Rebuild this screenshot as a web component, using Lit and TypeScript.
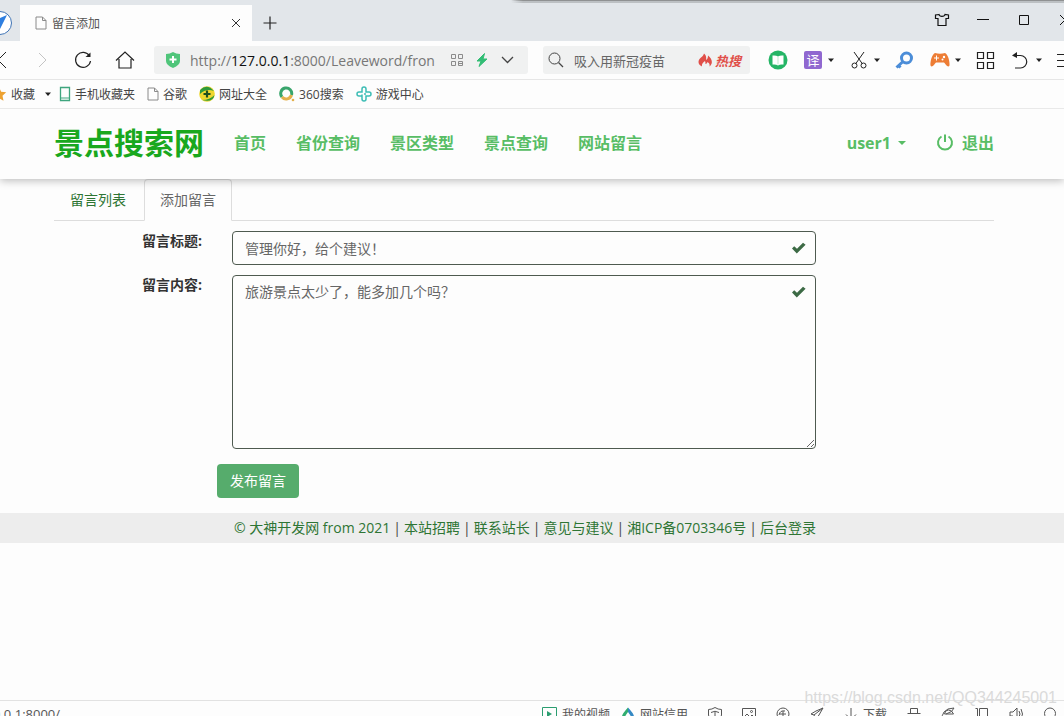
import { LitElement, html, svg, css, TemplateResult } from "lit";
import { customElement, state } from "lit/decorators.js";

const icon = (w: number, h: number, body: unknown): TemplateResult =>
  html`<svg width=${w} height=${h} viewBox="0 0 ${w} ${h}" fill="none" stroke="currentColor" aria-hidden="true">${body}</svg>`;

const page = () => icon(12, 14, svg`<path d="M1 1h6.500L11 4.500V13H1zM7.500 1v3.500H11" stroke="#8a8a8a"/>`);
const caret = () => html`<svg width="6" height="4" viewBox="0 0 6 4" aria-hidden="true"><path d="M0 0.500h6L3 4z" fill="#222"/></svg>`;
const check = () => html`<svg class="check" width="16" height="12" viewBox="0 0 16 12" aria-hidden="true"><path d="M1 6.500L3.200 4.300 6 6.800 12 0.800l2.600 2L5.800 11.500z" fill="#3c6a45"/></svg>`;

@customElement("browser-chrome")
export class BrowserChrome extends LitElement {
  static styles = css`
    :host { display: block; color: #444; font-size: 12px; }
    * { box-sizing: border-box; }
    svg { display: block; flex: none; }
    button { border: 0; background: none; padding: 0; margin: 0; font: inherit; color: inherit; display: flex; align-items: center; justify-content: center; flex: none; }
    .strip { display: flex; height: 41px; padding-top: 5px; overflow: hidden;
      background: linear-gradient(90deg, transparent, #8f9192 12px) right top / 52% 1px no-repeat,
        linear-gradient(90deg, transparent, #bcc0c3 12px) right top / 52% 3px no-repeat, #e2e6ea; }
    .logo { margin-left: -13px; }
    .tab { display: flex; align-items: center; gap: 5px; width: 232px; margin-left: 7px; padding: 0 10px 0 15px; background: #fdfdfd; }
    .title { flex: 1; color: #555; }
    .plus { width: 36px; color: #222; }
    .window { display: flex; margin-left: auto; margin-right: -21px; height: 30px; color: #111; }
    .window button { width: 41px; }
    .bar { display: flex; align-items: center; height: 39px; overflow: hidden; background: #fdfdfd; border-bottom: 1px solid #e6e6e6; }
    .nav { display: flex; margin-left: -22px; }
    .nav button { width: 42px; }
    .box { display: flex; align-items: center; height: 28px; border-radius: 3px; background: #f0f1f1; }
    .address { flex: 1; min-width: 0; margin-left: 8px; padding: 0 14px 0 11px; gap: 9px; }
    .url { flex: 1; min-width: 0; overflow: hidden; white-space: nowrap; font-size: 14px; color: #777; }
    .host { color: #111; }
    .actions { display: flex; align-items: center; gap: 13px; }
    .search { width: 207px; margin-left: 15px; padding: 0 9px 0 5px; gap: 10px; }
    .search input { flex: 1; min-width: 0; border: 0; padding: 0; background: none; outline: 0; font: inherit; font-size: 13px; color: #666; }
    .hot { display: flex; align-items: center; gap: 2px; font-size: 13px; font-weight: 700; font-style: italic; color: #e04f49; text-decoration: none; }
    .tools { display: flex; gap: 15px; margin: 0 -9px 0 18px; color: #222; }
    .tools button { gap: 5px; }
    .tools button:last-child { margin-left: -4px; }
    .translate { width: 18px; height: 18px; margin: 0 1px; border-radius: 2px; background: #9068d0; color: #fff; font-size: 13px; line-height: 18px; text-align: center; }
    .marks { display: flex; align-items: center; gap: 12px; height: 29px; overflow: hidden; background: #fdfdfd; border-bottom: 1px solid #e9e9e9; }
    .marks a { display: flex; align-items: center; gap: 4px; color: inherit; text-decoration: none; white-space: nowrap; }
    .fav { display: flex; align-items: center; gap: 4px; margin-left: -9px; }
    .fav svg:last-child { margin-left: 6px; }
    .marks a:first-of-type { margin-left: -4px; }
  `;

  private tool(label: string, glyph: unknown, menu = false) {
    return html`<button aria-label=${label}>${glyph}${menu ? caret() : ""}</button>`;
  }

  render() {
    return html`
      <div class="strip">
        <button class="logo" aria-label="浏览器">${icon(26, 26, svg`<circle cx="13" cy="13" r="11.500" fill="#fff" stroke="#3f74b5"/><path d="M20 5L4 12l6 2 2 7z" fill="#2f7fe0" stroke="none"/>`)}</button>
        <div class="tab">${page()}<span class="title">留言添加</span>
          <button aria-label="关闭标签">${icon(12, 12, svg`<path d="M2 2l8 8M10 2l-8 8" stroke="#333"/>`)}</button>
        </div>
        <button class="plus" aria-label="新标签">${icon(14, 14, svg`<path d="M7 0.500v13M0.500 7h13" stroke-width="1.200"/>`)}</button>
        <div class="window">
          <button aria-label="皮肤">${icon(16, 14, svg`<path d="M5 1.500L1.500 2v3.500H4v7h8v-7h2.500V2L11 1.500C10.500 4 5.500 4 5 1.500z" stroke-width="1.200"/>`)}</button>
          <button aria-label="最小化">${icon(12, 12, svg`<path d="M0 5.500h12"/>`)}</button>
          <button aria-label="最大化">${icon(12, 12, svg`<path d="M1.500 1.500h9v9h-9z"/>`)}</button>
          <button aria-label="关闭">${icon(12, 12, svg`<path d="M1 1l10 10M11 1L1 11"/>`)}</button>
        </div>
      </div>
      <div class="bar">
        <div class="nav">
          <button aria-label="后退">${icon(16, 18, svg`<path d="M15 1L7 9l8 8" stroke="#222"/>`)}</button>
          <button aria-label="前进">${icon(12, 18, svg`<path d="M4 2l7 7-7 7" stroke="#c4c4c4"/>`)}</button>
          <button aria-label="刷新">${icon(18, 18, svg`<path d="M15.500 5A7.500 7.500 0 1 0 16.500 10" stroke="#222" stroke-width="1.200"/><path d="M16.500 1.500v4.500h-5z" fill="#222" stroke="none"/>`)}</button>
          <button aria-label="主页">${icon(20, 18, svg`<path d="M1 9.500L10 1l9 8.500M4 8v9h12V8" stroke="#222" stroke-width="1.200"/>`)}</button>
        </div>
        <div class="box address">
          ${icon(16, 18, svg`<path d="M1 3Q5 3 8 1q3 2 7 2v7q0 4-7 7-7-3-7-7z" fill="#4fc57a" stroke="none"/><path d="M8 5v7M4.500 8.500h7" stroke="#fff" stroke-width="2"/>`)}
          <span class="url">http://<span class="host">127.0.0.1</span>:8000/Leaveword/fron</span>
          <div class="actions">
            ${icon(12, 12, svg`<path d="M0.500 0.500h4v4h-4zM7.500 0.500h4v4h-4zM0.500 7.500h4v4h-4zM7.500 7.500h4v4h-4zM7 9.500h5" stroke="#8b8b8b"/>`)}
            ${icon(12, 14, svg`<path d="M8.500 0.500L1 8h4L3 13.500 11 6H7z" fill="#32bd75" stroke="#32bd75" stroke-linejoin="round"/>`)}
            <button aria-label="展开">${icon(13, 8, svg`<path d="M1 1l5.500 5.500L12 1" stroke="#444" stroke-width="1.300"/>`)}</button>
          </div>
        </div>
        <label class="box search">
          ${icon(16, 16, svg`<circle cx="6.500" cy="6.500" r="5.500"/><path d="M10.500 10.500L15 15" stroke-width="1.200"/>`)}
          <input aria-label="搜索" value="吸入用新冠疫苗" />
          <a class="hot" href="#">${icon(15, 14, svg`<path d="M4 13.500C-1 11 0 7 3 4.500 5 3 5.500 2 6 0.500c2 1.500 2.500 3.500 2 6.500 1.500-1 2-2.500 2-4.500 4 3 5.500 8 1.500 11 .5-2.500-.5-3.500-2-4.500-.5 1.500-1.500 2-2 2 0-1 0-2-.5-3-2 1.500-3.500 3-3 5.500z" fill="#e04f49" stroke="none"/>`)}热搜</a>
        </label>
        <div class="tools">
          ${this.tool("阅读", icon(20, 20, svg`<circle cx="10" cy="10" r="9.500" fill="#25b566" stroke="none"/><path d="M4.500 5.500Q8 5 10 6.500 12 5 15.500 5.500v9Q12 14 10 15.500 8 14 4.500 14.500z" fill="#fff" stroke="none"/><path d="M10 6.500v8" stroke="#bfe9cf"/>`))}
          ${this.tool("翻译", html`<span class="translate">译</span>`, true)}
          ${this.tool("截图", icon(20, 20, svg`<path d="M5 2l8.500 12M15 2L6.500 14"/><circle cx="5.500" cy="15.500" r="2.500"/><circle cx="14.500" cy="15.500" r="2.500"/>`), true)}
          ${this.tool("密码", icon(20, 20, svg`<circle cx="11.500" cy="8" r="5" stroke="#4b8dd8" stroke-width="3"/><path d="M8 11.500L1.500 17.500M3.500 15.500l2 2" stroke="#4b8dd8" stroke-width="3"/>`))}
          ${this.tool("游戏", icon(20, 20, svg`<path d="M5 3q5 1.500 10 0c3 1 5 9 4.500 12.500-1.500 3-4-1.500-5.500-3H6c-1.500 1.500-4 6-5.500 3C0 12 2 4 5 3z" fill="#ed7d35" stroke="none"/><path d="M6.500 5.500v5M4 8h5" stroke="#fff"/><circle cx="14" cy="7" r="1.200" fill="#fff" stroke="none"/><circle cx="12.500" cy="9.500" r="1" fill="#fff" stroke="none"/>`), true)}
          ${this.tool("应用", icon(20, 20, svg`<path d="M1.500 2.500h6v6h-6zM11.500 2.500h6v6h-6zM1.500 12.500h6v6h-6zM11.500 12.500h6v6h-6z" stroke-width="1.200"/>`))}
          ${this.tool("撤销", icon(20, 20, svg`<path d="M3 5.500h6.500a6 6 0 0 1 0 12.500H4" stroke-width="1.200"/><path d="M1 5.500L6 2v6z" fill="currentColor" stroke="none"/>`), true)}
          ${this.tool("菜单", icon(20, 20, svg`<path d="M4 4.500h16M4 10.500h16M4 16.500h16" stroke-width="1.200"/>`))}
        </div>
      </div>
      <div class="marks">
        <button class="fav">${icon(16, 16, svg`<path d="M8 1l2.200 4.700 5 .6-3.700 3.400 1 5L8 12.200 3.500 14.700l1-5L.8 6.300l5-.6z" fill="#eda232" stroke="none"/>`)}收藏${caret()}</button>
        <a href="#">${icon(12, 16, svg`<path d="M1.500 1.500h9v13h-9z" stroke="#3fa57e" stroke-width="1.300"/><path d="M1.500 12h9" stroke="#3fa57e"/>`)}手机收藏夹</a>
        <a href="#">${page()}谷歌</a>
        <a href="#">${icon(16, 16, svg`<circle cx="8" cy="8" r="7.800" fill="#efd72e" stroke="none"/><path d="M1 4Q8-3 15 5q-8-3-14 3zM15.500 9Q14 17 3 14q8 0 12.500-5z" fill="#2f9a3b" stroke="none"/><path d="M8 4.500v7M4.500 8h7" stroke="#1d4f1d" stroke-width="2.200"/>`)}网址大全</a>
        <a href="#">${icon(16, 16, svg`<path d="M3 11A5.500 5.500 0 1 1 12.500 9" stroke="#39a56c" stroke-width="3"/><path d="M12.500 9A5.500 5.500 0 0 1 3 11" stroke="#e3b04c" stroke-width="3"/><circle cx="14" cy="14" r="1.300" fill="#e3b04c" stroke="none"/>`)}360搜索</a>
        <a href="#">${icon(16, 16, svg`<path d="M6 10H3a2 2 0 0 1 0-4h3V3a2 2 0 0 1 4 0v3h3a2 2 0 0 1 0 4h-3v3a2 2 0 0 1-4 0V8.500M8 8h2" stroke="#3dbdb5" stroke-width="1.500"/>`)}游戏中心</a>
      </div>`;
  }
}

@customElement("site-page")
export class SitePage extends LitElement {
  @state() private heading = "管理你好，给个建议！";
  @state() private content = "旅游景点太少了，能多加几个吗？";

  static styles = css`
    :host { display: block; font-size: 14px; line-height: 20px; color: #333; background: #fdfdfd; }
    * { box-sizing: border-box; }
    .container { max-width: 970px; margin: 0 auto; padding: 0 15px; }
    header { position: relative; z-index: 1; padding-right: 16px; background: #fdfdfd; box-shadow: 0 2px 8px rgba(0, 0, 0, 0.25); }
    header .container { display: flex; align-items: center; gap: 30px; height: 70px; padding-bottom: 3px; font-size: 16px; font-weight: 700; }
    header a { display: flex; align-items: center; color: #58bd65; text-decoration: none; white-space: nowrap; }
    .brand { font-size: 30px; color: #19a81e; }
    .user { margin-left: auto; gap: 7px; }
    .exit { gap: 8px; }
    main { padding-right: 16px; }
    .tabs { display: flex; gap: 2px; border-bottom: 1px solid #ddd; }
    .tabs a { padding: 10px 15px; margin-bottom: -1px; border: 1px solid transparent; border-radius: 4px 4px 0 0; color: #2e7534; text-decoration: none; }
    .tabs .active { color: #666; background: #fdfdfd; border-color: #ddd #ddd #fdfdfd; }
    .form { display: grid; grid-template-columns: 148px minmax(0, 584px); gap: 10px 30px; padding-top: 10px; }
    .label { font-weight: 700; text-align: right; }
    .field { position: relative; display: flex; }
    .control { width: 100%; margin: 0; padding: 6px 12px; border: 1px solid #4e5a50; border-radius: 4px; background: #fdfdfd; outline: 0; color: #666;
      font: inherit; }
    input.control { height: 34px; }
    textarea.control { height: 174px; resize: vertical; }
    .check { position: absolute; right: 9px; top: 11px; }
    .submit { margin: 15px 0 15px 163px; height: 34px; padding: 0 13px; border: 0; border-radius: 4px; background: #56ac6c; color: #fff; font: inherit; display: block; }
    footer { display: flex; justify-content: center; gap: 3px; padding: 5px 14px 5px 0; background: #ededed; color: #444; }
    footer a { color: #2e7534; text-decoration: none; }
  `;

  render() {
    const links = ["© 大神开发网 from 2021", "本站招聘", "联系站长", "意见与建议", "湘ICP备0703346号", "后台登录"];
    return html`
      <header><nav class="container">
        <a class="brand" href="#">景点搜索网</a>
        ${["首页", "省份查询", "景区类型", "景点查询", "网站留言"].map((t) => html`<a href="#">${t}</a>`)}
        <a class="user" href="#">user1 <svg width="8" height="4" viewBox="0 0 8 4"><path d="M0 0h8L4 4z" fill="currentColor"/></svg></a>
        <a class="exit" href="#">${icon(18, 18, svg`<path d="M5.500 2.500a7 7 0 1 0 7 0M9 0.500v7.500" stroke-width="2"/>`)}退出</a>
      </nav></header>
      <main><div class="container">
        <nav class="tabs"><a href="#">留言列表</a><a class="active" href="#">添加留言</a></nav>
        <form @submit=${(e: Event) => e.preventDefault()}>
          <div class="form">
            <label class="label" for="heading">留言标题:</label>
            <div class="field"><input class="control" id="heading" .value=${this.heading} @input=${(e: Event) => (this.heading = (e.target as HTMLInputElement).value)} />${check()}</div>
            <label class="label" for="content">留言内容:</label>
            <div class="field"><textarea class="control" id="content" rows="8" .value=${this.content} @input=${(e: Event) => (this.content = (e.target as HTMLTextAreaElement).value)}></textarea>${check()}</div>
          </div>
          <button class="submit">发布留言</button>
        </form>
      </div></main>
      <footer>${links.map((t, i) => html`${i ? html`<span>|</span>` : ""}<a href="#">${t}</a>`)}</footer>`;
  }
}

@customElement("status-bar")
export class StatusBar extends LitElement {
  static styles = css`
    :host { display: block; overflow: hidden; border-top: 1px solid #e2e2e2; background: #fdfdfd; font-size: 12px; color: #555; }
    .row { display: flex; align-items: center; height: 26px; margin: 0 7px 0 -7px; white-space: nowrap; }
    svg { display: block; flex: none; }
    .link { font-size: 13px; }
    .items { display: flex; align-items: center; gap: 20px; margin-left: auto; }
    button { display: flex; align-items: center; gap: 5px; border: 0; padding: 0; background: none; font: inherit; color: inherit; }
    .site { margin-left: -9px; }
  `;

  render() {
    const glyphs = [
      svg`<path d="M7 0.500Q10 2.500 13.500 2.500V8Q13 12 7 13.500 1 12 0.500 8V2.500Q4 2.500 7 0.500zM3 5.500Q7 3 11 5.500M7 5v5"/>`,
      svg`<path d="M0.500 1.500h13v11H0.500zM1 11l4-4 3 3 2-2 3 3"/><circle cx="9.500" cy="4.500" r="1"/>`,
      svg`<circle cx="7" cy="7" r="6"/><path d="M3 8q1-5 6-4M7 4v6M4 7h6"/>`,
      svg`<path d="M13 1L6 4 1 7l3 1 2 4 3-4zM13 1L4 8"/>`,
    ];
    const tail = [
      svg`<path d="M3.500 6V1.500h7V6M0.500 6.500h13M2.500 9v4h9V9"/>`,
      svg`<path d="M12.500 7H3.500q.5-4 4-4t5 4M2 12Q0 9 3 5t10-4q-1 4-8 6"/>`,
      svg`<path d="M0.500 1.500h2v10M4.500 1.500h8v11h-8z"/>`,
      svg`<path d="M1 5h3l4-4v12L4 9H1zM10 4q2 3 0 6M12 2q3 5 0 10"/>`,
      svg`<circle cx="7" cy="6.500" r="5.500"/><path d="M11 10.500l3 3"/>`,
    ];
    return html`<div class="row">
      <span class="link">0.0.1:8000/</span>
      <div class="items">
        <button>${icon(15, 14, svg`<path d="M0.500 0.500h14v13H0.500z" stroke="#2b9d70"/><path d="M5 4l5 3-5 3z" fill="#2b9d70" stroke="none"/>`)}我的视频</button>
        <button class="site">${icon(14, 14, svg`<path d="M7 0.500Q1 7 1 9.500q1 4 6 4v-3q-2 0-2.500-2L7 5z" fill="#31ad70" stroke="none"/><path d="M7 0.500q6 6.500 6 9-1 4-6 4v-3q2 0 2.500-2L7 5z" fill="#3589c4" stroke="none"/>`)}网站信用</button>
        ${glyphs.map((g) => html`<button>${icon(14, 14, g)}</button>`)}
        <button>${icon(14, 14, svg`<path d="M7 1v11M2 7.500l5 5 5-5"/>`)}下载</button>
        ${tail.map((g) => html`<button>${icon(14, 14, g)}</button>`)}
      </div>
    </div>`;
  }
}

@customElement("app-root")
export class AppRoot extends LitElement {
  static styles = css`
    :host { position: relative; display: flex; flex-direction: column; height: 100vh; overflow: hidden; background: #fdfdfd;
      font-family: "Open Sans", "Noto Sans CJK SC", sans-serif; }
    browser-chrome { flex: none; }
    site-page { flex: 1; min-height: 0; overflow: hidden; }
    status-bar { flex: 0 0 15px; }
    .mark { position: absolute; right: 7px; bottom: 8px; font: 16px/20px "Liberation Sans", sans-serif; color: #dadada; pointer-events: none; }
  `;

  render() {
    return html`<browser-chrome></browser-chrome><site-page></site-page><status-bar></status-bar>
      <span class="mark">https://blog.csdn.net/QQ344245001</span>`;
  }
}
